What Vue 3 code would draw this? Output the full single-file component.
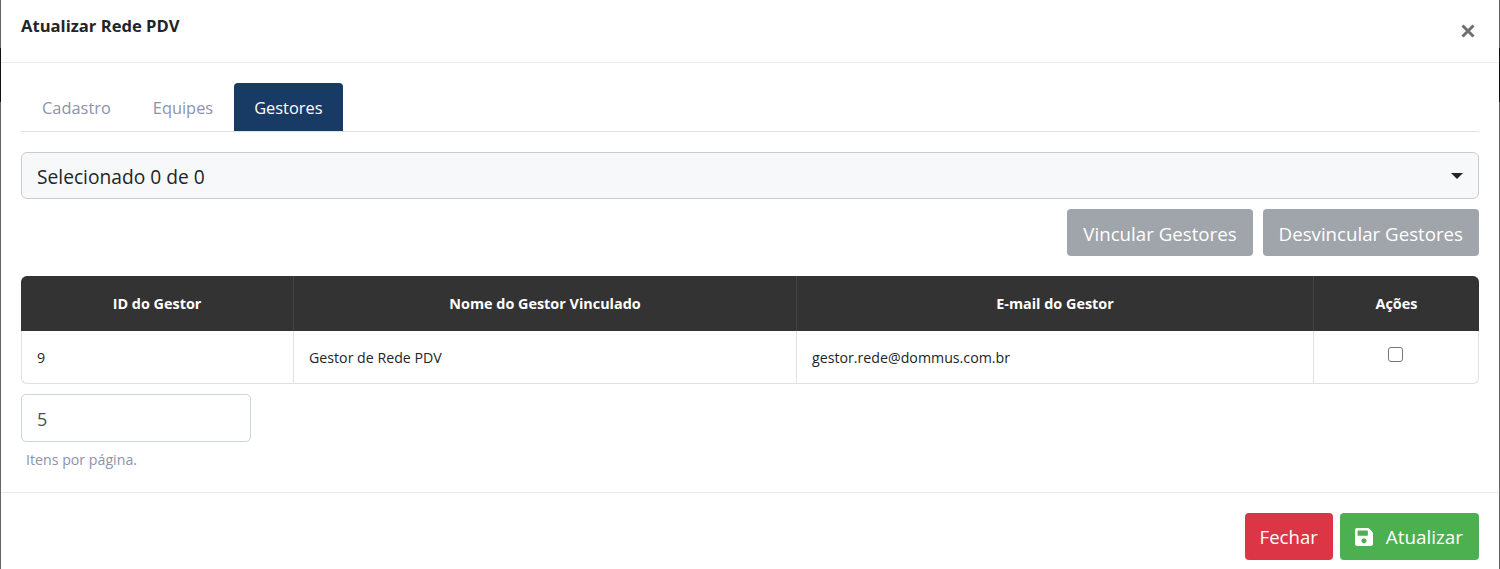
<script setup>
import { ref } from 'vue'

const tabs = ['Cadastro', 'Equipes', 'Gestores']
const activeTab = ref('Gestores')

const gestores = ref([
  { id: 9, nome: 'Gestor de Rede PDV', email: 'gestor.rede@dommus.com.br' }
])
</script>

<template>
  <div class="backdrop">
    <div class="modal">
      <header class="modal-header">
        <h5 class="modal-title">Atualizar Rede PDV</h5>
        <button class="close" type="button">
          <svg width="14" height="14" viewBox="0 0 14 14">
            <path d="M1.5 1.5 L12.5 12.5 M12.5 1.5 L1.5 12.5" stroke="#707070" stroke-width="3" fill="none" />
          </svg>
        </button>
      </header>

      <div class="modal-body">
        <nav class="tabs">
          <a
            v-for="tab in tabs"
            :key="tab"
            class="tab"
            :class="{ active: tab === activeTab }"
            @click="activeTab = tab"
          >{{ tab }}</a>
        </nav>

        <div class="select">
          <span>Selecionado 0 de 0</span>
          <span class="caret"></span>
        </div>

        <div class="link-actions">
          <button class="btn btn-muted" type="button">Vincular Gestores</button>
          <button class="btn btn-muted" type="button">Desvincular Gestores</button>
        </div>

        <table class="grid">
          <colgroup>
            <col class="col-id" />
            <col class="col-nome" />
            <col class="col-email" />
            <col />
          </colgroup>
          <thead>
            <tr>
              <th>ID do Gestor</th>
              <th>Nome do Gestor Vinculado</th>
              <th>E-mail do Gestor</th>
              <th>Ações</th>
            </tr>
          </thead>
          <tbody>
            <tr v-for="g in gestores" :key="g.id">
              <td>{{ g.id }}</td>
              <td>{{ g.nome }}</td>
              <td>{{ g.email }}</td>
              <td class="check-cell"><span class="check"></span></td>
            </tr>
          </tbody>
        </table>

        <div class="per-page">5</div>
        <small class="hint">Itens por página.</small>
      </div>

      <footer class="modal-footer">
        <button class="btn btn-danger" type="button">Fechar</button>
        <button class="btn btn-success" type="button">
          <svg class="save" width="18" height="18" viewBox="0 32 448 448">
            <path fill="#fff" d="M433.941 129.941l-83.882-83.882A48 48 0 0 0 316.118 32H48C21.49 32 0 53.49 0 80v352c0 26.51 21.49 48 48 48h352c26.51 0 48-21.49 48-48V163.882a48 48 0 0 0-14.059-33.941zM224 416c-35.346 0-64-28.654-64-64 0-35.346 28.654-64 64-64s64 28.654 64 64c0 35.346-28.654 64-64 64zm96-304.52V212c0 6.627-5.373 12-12 12H76c-6.627 0-12-5.373-12-12V108c0-6.627 5.373-12 12-12h228.52c3.183 0 6.235 1.264 8.485 3.515l3.48 3.48A11.996 11.996 0 0 1 320 111.48z" />
          </svg>
          Atualizar
        </button>
      </footer>
    </div>
  </div>
</template>

<style>
html, body {
  margin: 0;
  background: #666;
}
</style>

<style scoped>
/* the page behind the modal only shows as a 1px strip on each side */
.backdrop {
  padding: 0 1px;
  height: 569px;
  box-sizing: border-box;
  overflow: hidden;
  background: linear-gradient(#666 48px, #111 48px, #111 102px, #666 102px);
  font-family: "Open Sans", "Noto Sans", sans-serif;
  color: #212529;
}

.modal {
  background: #fff;
  height: 569px;
}

.modal-header {
  height: 63px;
  box-sizing: border-box;
  border-bottom: 1px solid #e9ecef;
  padding: 16px 20px;
  display: flex;
  justify-content: space-between;
}

.modal-title {
  margin: 0;
  font-size: 16.6px;
  line-height: 20px;
  font-weight: 700;
}

.close {
  border: 0;
  background: none;
  padding: 0;
  margin: 7px 4px 0 0;
  height: 16px;
  line-height: 0;
}

.modal-body {
  padding: 20px 20px 0;
  height: 430px;
  box-sizing: border-box;
  border-bottom: 1px solid #e9ecef;
}

.tabs {
  display: flex;
  height: 48px;
  border-bottom: 1px solid #dee2e6;
}

.tab {
  padding: 0 21px;
  line-height: 49px;
  height: 48px;
  font-size: 16.4px;
  color: #8d92ad;
  border-radius: 4px 4px 0 0;
}

.tab.active {
  padding: 0 20px;
  background: #183b66;
  color: #fff;
}

.select {
  margin-top: 20px;
  height: 47px;
  box-sizing: border-box;
  padding: 2px 15px 0;
  background: #f7f8fa;
  border: 1px solid #ccc;
  border-radius: 6px;
  display: flex;
  align-items: center;
  justify-content: space-between;
  font-size: 19.2px;
}

.caret {
  width: 0;
  height: 0;
  margin-top: -2px;
  border-left: 6px solid transparent;
  border-right: 6px solid transparent;
  border-top: 6px solid #212529;
}

.link-actions {
  margin-top: 10px;
  display: flex;
  justify-content: flex-end;
  gap: 10px;
}

.btn {
  height: 47px;
  box-sizing: border-box;
  border: 0;
  border-radius: 4px;
  padding: 0 16px;
  font-family: inherit;
  font-size: 18.6px;
  color: #fff;
}

.btn-muted {
  padding: 1px 16px 0;
  font-size: 18.7px;
  background: #a0a4ab;
}

.grid {
  margin-top: 20px;
  width: 100%;
  table-layout: fixed;
  border-collapse: separate;
  border-spacing: 0;
  font-size: 14.2px;
}

.col-id { width: 272px; }
.col-nome { width: 503px; }
.col-email { width: 517px; }

.grid th {
  height: 55px;
  padding: 0;
  background: #333;
  color: #fff;
  font-size: 14.4px;
  font-weight: 700;
  border-left: 1px solid #444;
  text-align: center;
}

.grid th:first-child {
  border-left: 0;
  border-top-left-radius: 6px;
}

.grid th:last-child {
  border-top-right-radius: 6px;
}

.grid td {
  height: 53px;
  box-sizing: border-box;
  padding: 0 15px;
  border-bottom: 1px solid #dee2e6;
  border-left: 1px solid #dee2e6;
}

.grid td:last-child {
  border-right: 1px solid #dee2e6;
  border-bottom-right-radius: 6px;
}

.grid td:first-child {
  border-bottom-left-radius: 6px;
}

.check-cell {
  text-align: center;
  vertical-align: top;
  line-height: 0;
}

.check {
  display: inline-block;
  width: 13px;
  height: 13px;
  margin: 16px 2px 0 0;
  border: 1px solid #767676;
  border-radius: 3px;
}

.per-page {
  margin-top: 10px;
  width: 230px;
  height: 48px;
  box-sizing: border-box;
  padding: 0 15px;
  line-height: 48px;
  border: 1px solid #ced4da;
  border-radius: 5px;
  font-size: 18px;
  color: #495057;
}

.hint {
  display: block;
  margin: 9px 0 0 5px;
  font-size: 14.2px;
  line-height: 18px;
  color: #8d92ad;
}

.modal-footer {
  padding: 20px 20px 0;
  display: flex;
  justify-content: flex-end;
  gap: 7px;
}

.btn-danger {
  background: #dc3545;
  padding: 0 15px;
}

.btn-success {
  background: #4caf50;
  display: flex;
  align-items: center;
  gap: 13px;
  padding: 0 16px 0 15px;
  font-size: 18.85px;
}
</style>
